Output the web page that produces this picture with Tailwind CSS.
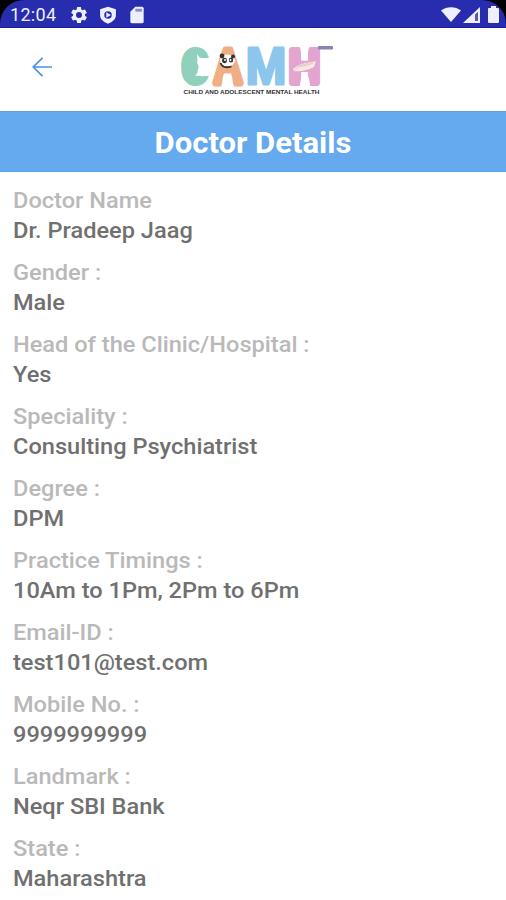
<!DOCTYPE html>
<html lang="en">
  <head>
    <meta charset="UTF-8" />
    <meta name="viewport" content="width=device-width, initial-scale=1.0" />
    <title>Doctor Details</title>
    <script src="https://cdn.jsdelivr.net/npm/@tailwindcss/browser@4"></script>
  </head>
  <body class="bg-white font-['Roboto',sans-serif] h-screen overflow-hidden">
    <!-- Status bar -->
    <div class="bg-black h-7">
      <div class="h-full bg-[#282cae] border-b border-[#1c1c9c] rounded-tl-[24px] rounded-tr-[24px] flex items-center justify-between pl-[10px] pr-[7px] text-[#eef0ff]">
        <div class="flex items-center">
          <span class="text-lg leading-none w-[46px] mt-0.5 tracking-[0.3px]">12:04</span>
          <svg class="ml-[13px] mt-0.5 w-5 h-5" viewBox="0 0 24 24" fill="currentColor">
            <path d="M19.14 12.94c.04-.3.06-.61.06-.94s-.02-.64-.07-.94l2.03-1.58a.49.49 0 0 0 .12-.61l-1.92-3.32a.49.49 0 0 0-.59-.22l-2.39.96a7 7 0 0 0-1.62-.94l-.36-2.54a.48.48 0 0 0-.48-.41h-3.84a.48.48 0 0 0-.47.41l-.36 2.54c-.59.24-1.13.57-1.62.94l-2.39-.96a.48.48 0 0 0-.59.22L2.74 8.87a.48.48 0 0 0 .12.61l2.03 1.58a6 6 0 0 0 0 1.88l-2.03 1.58a.49.49 0 0 0-.12.61l1.92 3.32c.12.22.37.29.59.22l2.39-.96c.5.38 1.03.7 1.62.94l.36 2.54c.05.24.24.41.48.41h3.84c.24 0 .44-.17.47-.41l.36-2.54a7 7 0 0 0 1.62-.94l2.39.96c.22.08.47 0 .59-.22l1.92-3.32a.48.48 0 0 0-.12-.61zM12 15.6a3.6 3.6 0 1 1 0-7.2 3.6 3.6 0 0 1 0 7.2z" />
          </svg>
          <svg class="ml-[9px] mt-0.5 w-5 h-5" viewBox="0 0 24 24" fill="currentColor" fill-rule="evenodd">
            <path d="M12 2 2.500 5v7c0 5 4 8.500 9.500 10.500 5.500-2 9.500-5.500 9.500-10.500V5zM12 7.500a4.500 4.500 0 1 1 0 9 4.500 4.500 0 0 1 0-9z" />
            <path d="M10 8.800v6.400l5.500-3.200z" />
          </svg>
          <svg class="ml-[9px] mt-0.5 w-5 h-5" viewBox="0 0 24 24">
            <path d="M18 2h-8L4 8v12a2 2 0 0 0 2 2h12a2 2 0 0 0 2-2V4a2 2 0 0 0-2-2z" fill="currentColor" />
            <path d="M10 4.500h8V8h-8z" fill="#8a8cd6" />
          </svg>
        </div>
        <div class="flex items-center mt-0.5">
          <svg class="w-5 h-[15px]" viewBox="0 0 20 15" fill="currentColor">
            <path d="M0 3.500C5.500-1 14.500-1 20 3.500L10 15z" />
          </svg>
          <svg class="ml-0.5 w-[17px] h-4" viewBox="0 0 17 16">
            <path d="M0 16 17 0v16z" fill="currentColor" />
            <path d="M12 7.500 15 4.800V14h-3z" fill="#5557bd" />
          </svg>
          <svg class="ml-[8px] w-[11px] h-[17px]" viewBox="0 0 11 17" fill="currentColor">
            <path d="M3 0h5v2h2a1 1 0 0 1 1 1v13a1 1 0 0 1-1 1H1a1 1 0 0 1-1-1V3a1 1 0 0 1 1-1h2z" />
          </svg>
        </div>
      </div>
    </div>

    <!-- Header -->
    <div class="h-[83px] grid grid-cols-[180px_1fr] items-center">
      <button class="ml-8 -mt-1.5 w-5 h-5" aria-label="Back">
        <svg class="w-5 h-5" viewBox="0 0 20 20" fill="none" stroke="#4a91e6" stroke-width="1.700">
          <path d="M20 10H1M10.500 .8 1.200 10l9.300 9.200" />
        </svg>
      </button>
      <svg class="w-[160px] h-[60px] overflow-visible" viewBox="180 40 160 60">
        <g font-family="Roboto, sans-serif" font-weight="700" font-size="47" stroke-width="6" stroke-linejoin="round">
          <text x="182" y="82.500" textLength="26" lengthAdjust="spacingAndGlyphs" fill="#91d0bc" stroke="#91d0bc">C</text>
          <text x="215" y="82.500" textLength="26" lengthAdjust="spacingAndGlyphs" fill="#f0ae84" stroke="#f0ae84" stroke-width="7">A</text>
          <text x="246" y="83.500" font-size="50" textLength="40" lengthAdjust="spacingAndGlyphs" fill="#8cc6ec" stroke="#8cc6ec" stroke-width="3">M</text>
          <text x="289" y="82.500" textLength="31" lengthAdjust="spacingAndGlyphs" fill="#e3a5cf" stroke="#e3a5cf">H</text>
        </g>
        <!-- face profile inside the C -->
        <ellipse cx="192" cy="66" rx="9.500" ry="17" fill="#91d0bc" />
        <path d="M211 58h-10c-2-1-3-2-4-4 0 4 1 6 0 9 2 2 2 4 1 6 0 3-1 5-3 7 5-1 6 1 9 0h7z" fill="#fff" />
        <!-- panda face in the A -->
        <path d="M219 58h17l2 16h-21z" fill="#f0ae84" />
        <ellipse cx="227.500" cy="60.500" rx="7.500" ry="6" fill="#fff" />
        <g fill="#333">
          <circle cx="222" cy="56" r="2.400" />
          <circle cx="233" cy="56.500" r="2" />
          <ellipse cx="224.500" cy="60.500" rx="2.400" ry="2.800" />
          <ellipse cx="231" cy="60" rx="2.200" ry="2.600" />
        </g>
        <path d="M220.500 63c1.500 4 6 5 11 3.500" fill="none" stroke="#333" stroke-width="1.800" />
        <circle cx="225" cy="60" r="1" fill="#fff" />
        <circle cx="230.500" cy="60" r="1" fill="#fff" />
        <path d="M221 86.500c2-4 1-9 3-13h7c2 4 1 9 3 13z" fill="#fff" />
        <!-- hands across the H -->
        <path d="M300 45h9l-2 15h-5zM300 87c0-5 1-9 3-13h4c2 4 3 8 3 13z" fill="#fff" />
        <path d="M293 69c6-5 14-7 23-8l-2 6c-6 3-13 5-20 4z" fill="#f8e5e4" />
        <path d="M295 70c4-5 10-3 18-7M298 65c5 1 10-2 17-4" fill="none" stroke="#d8b0b0" stroke-width=".6" />
        <rect x="318" y="46" width="15" height="3.500" rx="1" fill="#8582b6" />
        <text x="183.500" y="93.500" textLength="136" lengthAdjust="spacingAndGlyphs" font-family="Liberation Sans, sans-serif" font-weight="700" font-size="6" fill="#333">CHILD AND ADOLESCENT MENTAL HEALTH</text>
      </svg>
    </div>

    <!-- Title -->
    <div class="h-[61px] bg-[#65a9ef] border-y border-[#5b9fe6] flex items-center justify-center">
      <h1 class="text-white text-[29px] font-bold leading-none mt-1 scale-x-[1.07]">Doctor Details</h1>
    </div>

    <!-- Details -->
    <dl id="details" class="w-fit ml-[13px] pt-[14px] flex flex-col gap-3 text-[22px] leading-[30px] font-medium whitespace-nowrap origin-left scale-x-[1.072]"></dl>

    <script>
      const details = [
        { label: "Doctor Name", value: "Dr. Pradeep Jaag" },
        { label: "Gender :", value: "Male" },
        { label: "Head of the Clinic/Hospital :", value: "Yes" },
        { label: "Speciality :", value: "Consulting Psychiatrist" },
        { label: "Degree :", value: "DPM" },
        { label: "Practice Timings :", value: "10Am to 1Pm, 2Pm to 6Pm" },
        { label: "Email-ID :", value: "test101@test.com" },
        { label: "Mobile No. :", value: "9999999999" },
        { label: "Landmark :", value: "Neqr SBI Bank" },
        { label: "State :", value: "Maharashtra" },
      ];

      document.getElementById("details").innerHTML = details
        .map(
          (item) => `
          <div>
            <dt class="text-[#b9b9b9]">${item.label}</dt>
            <dd class="text-[#707070]">${item.value}</dd>
          </div>`
        )
        .join("");
    </script>
  </body>
</html>
